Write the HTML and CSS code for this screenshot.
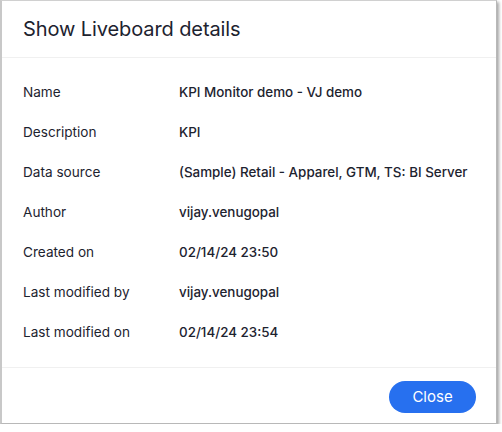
FILE: index.html
```html
<!DOCTYPE html>
<html>
<head>
<meta charset="utf-8">
<link rel="stylesheet" href="styles.css">
</head>
<body>
<div class="dialog">
  <div class="header">Show Liveboard details</div>
  <div class="body">
    <div class="row"><div class="label">Name</div><div class="value">KPI Monitor demo - VJ demo</div></div>
    <div class="row"><div class="label">Description</div><div class="value">KPI</div></div>
    <div class="row"><div class="label">Data source</div><div class="value">(Sample) Retail - Apparel, GTM, TS: BI Server</div></div>
    <div class="row"><div class="label">Author</div><div class="value">vijay.venugopal</div></div>
    <div class="row"><div class="label">Created on</div><div class="value">02/14/24 23:50</div></div>
    <div class="row"><div class="label">Last modified by</div><div class="value">vijay.venugopal</div></div>
    <div class="row"><div class="label">Last modified on</div><div class="value">02/14/24 23:54</div></div>
  </div>
  <div class="footer"><button class="close">Close</button></div>
</div>
</body>
</html>
```

FILE: styles.css
```css
html, body {
  margin: 0;
  padding: 0;
  background: #ffffff;
}
body {
  font-family: Inter, "Noto Sans", sans-serif;
  color: #1d232f;
}
.dialog {
  box-sizing: border-box;
  width: 497px;
  height: 424px;
  background: #ffffff;
  border-left: 2px solid #c8c8c8;
  border-top: 1px solid #d0d0d0;
  border-right: 1px solid #b8b8b8;
  border-bottom: 1px solid #b8b8b8;
  box-shadow: 2px 2px 3px rgba(0, 0, 0, 0.35);
  display: flex;
  flex-direction: column;
}
.header {
  height: 57px;
  box-sizing: border-box;
  padding: 0 21px;
  display: flex;
  align-items: center;
  font-size: 20px;
  font-weight: 400;
  border-bottom: 1px solid #f0f0f0;
  letter-spacing: -0.1px;
}
.body {
  padding: 14px 0 15px 21px;
  border-bottom: 1px solid #f0f0f0;
}
.row {
  display: flex;
  height: 40px;
  align-items: center;
}
.label {
  width: 156px;
  font-size: 13.6px;
  font-weight: 400;
}
.value {
  font-size: 13.4px;
  font-weight: 500;
}
.footer {
  flex: 1;
  display: flex;
  align-items: center;
  justify-content: flex-end;
  padding-right: 20px;
}
.close {
  width: 87px;
  height: 32px;
  border: none;
  border-radius: 16px;
  background: #2770ef;
  color: #ffffff;
  font-family: Inter, "Noto Sans", sans-serif;
  font-size: 15px;
  margin-top: 2px;
}
```
